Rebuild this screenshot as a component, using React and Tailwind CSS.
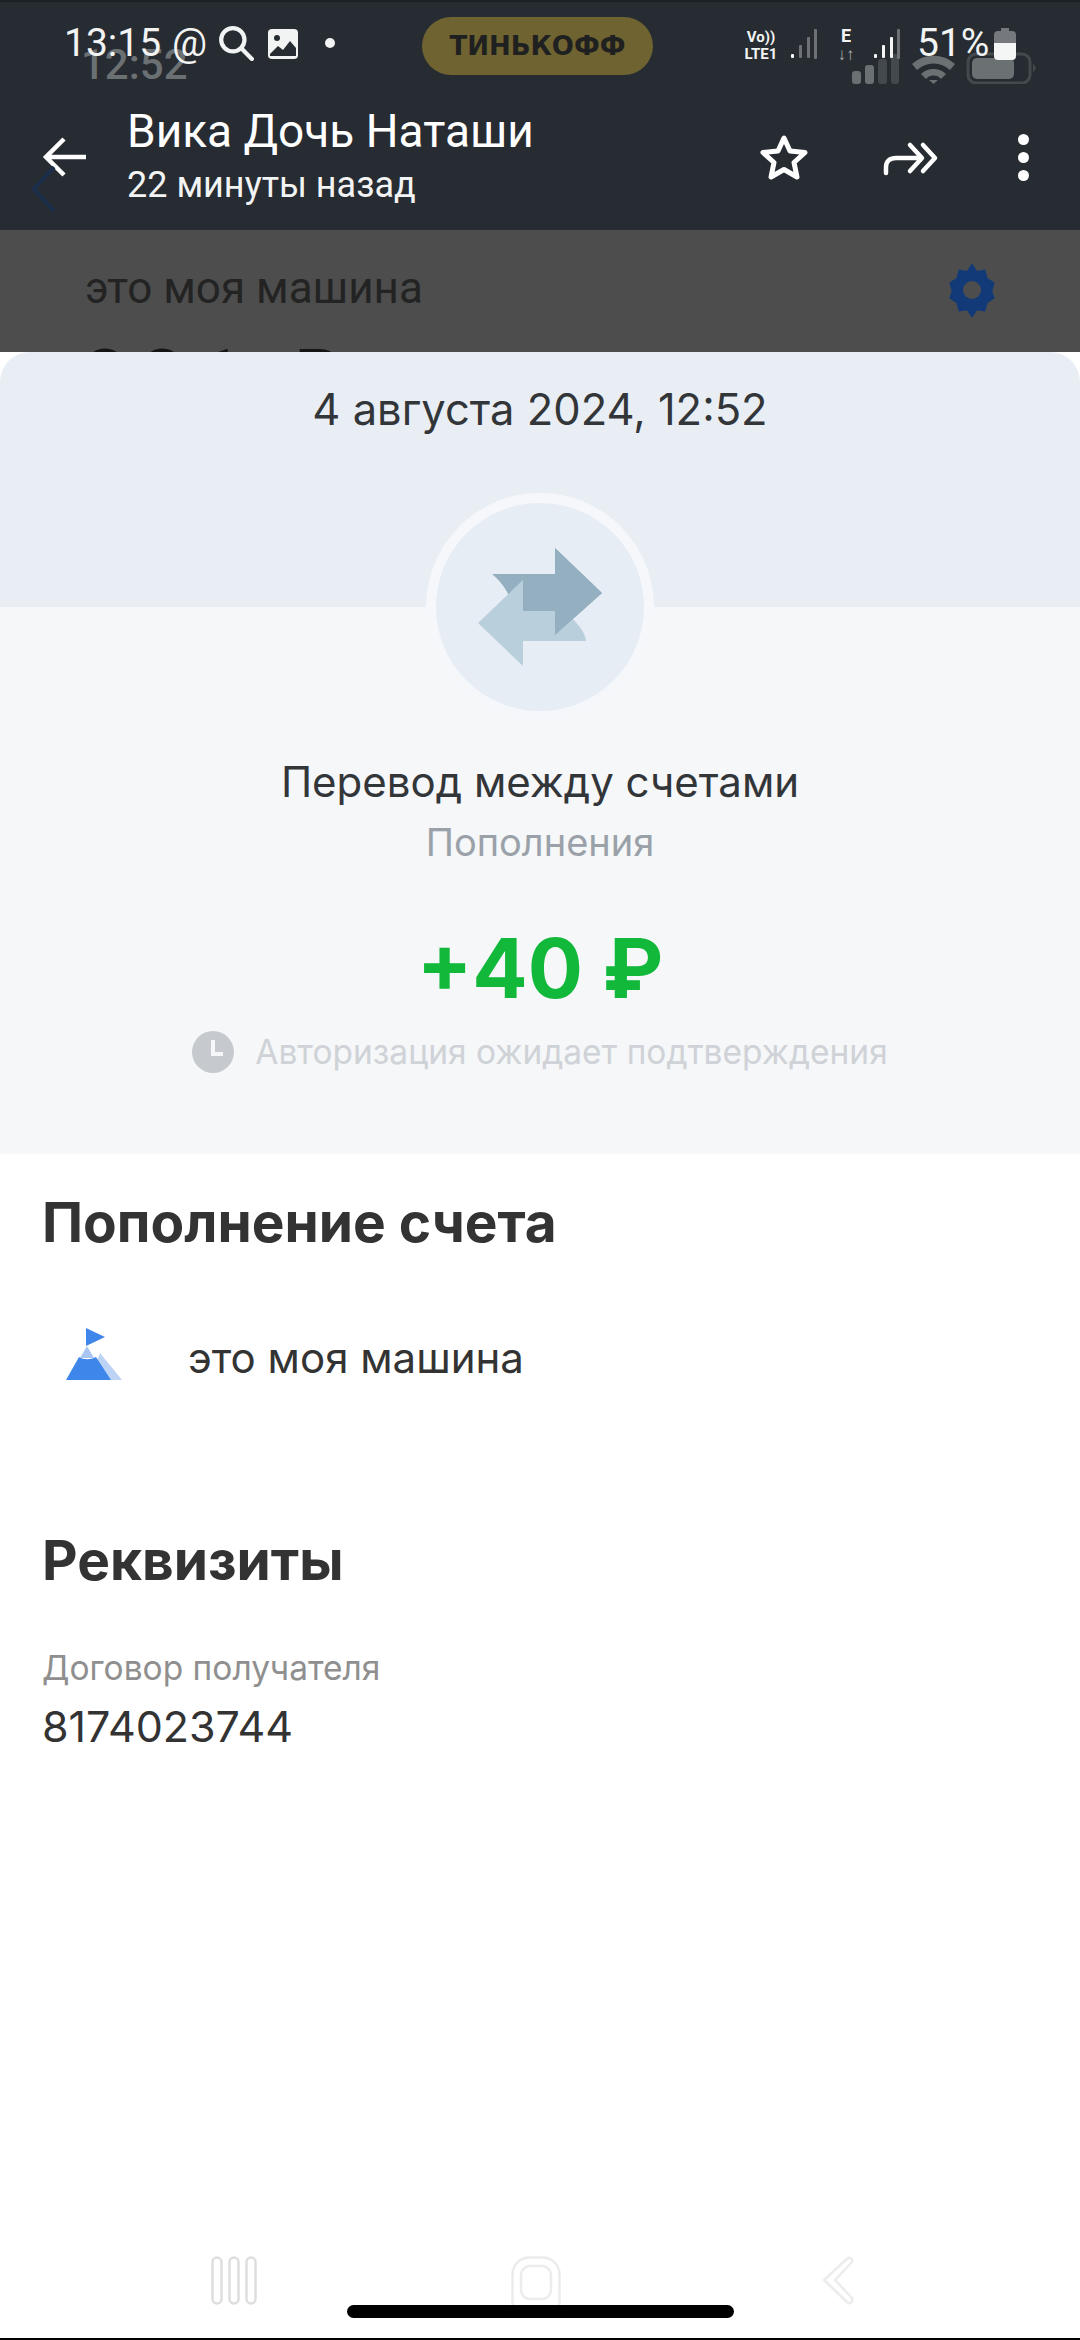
import React from 'react';

const SignalBars = ({ active, className }) => (
  <svg viewBox="0 0 28 30" className={className}>
    {[[1, 25, 4], [9, 16, 13], [17, 8, 21], [24, 0, 30]].map(([x, y, h], i) => (
      <rect key={x} x={x} y={y} width="3" height={h} rx="1" fill={i < active ? '#f4f5f5' : '#6e7276'} />
    ))}
  </svg>
);

const StatusBar = () => (
  <div className="flex h-[94px] items-start pt-[21px] text-[#f2f3f3]">
    <span className="ml-[64px] w-[98px] text-[39px] leading-[40px]">13:15</span>
    <span className="ml-[10px] w-[38px] text-[39px] leading-[40px]">@</span>
    <svg viewBox="0 0 34 34" className="ml-[8px] mt-[2px] h-[36px] w-[36px]" fill="none" stroke="#f2f3f3">
      <circle cx="14" cy="14" r="11" strokeWidth="4" />
      <path d="M22 22l10 10" strokeWidth="4" strokeLinecap="round" />
    </svg>
    <svg viewBox="0 0 30 30" className="ml-[14px] mt-[6px] h-[30px] w-[30px]">
      <rect width="30" height="30" rx="4" fill="#f2f3f3" />
      <circle cx="9" cy="9" r="3" fill="#272c32" />
      <path d="M2 25l8-8 5 4 7-9 6 7v8H2z" fill="#272c32" />
    </svg>
    <span className="ml-[27px] mt-[15px] h-[10px] w-[10px] rounded-full bg-[#f2f3f3]" />
    <div className="ml-[87px] flex h-[58px] w-[231px] -translate-y-[6px] items-center justify-center rounded-full bg-[#6f6331]">
      <span className="font-['DejaVu_Sans',sans-serif] text-[26px] font-bold leading-none text-[#1f2020]">ТИНЬКОФФ</span>
    </div>
    <div className="ml-[88px] flex w-[40px] flex-col items-center pt-[6px] text-[15px] font-bold leading-[17px]">
      <span>Vo))</span>
      <span>LTE1</span>
    </div>
    <SignalBars active={1} className="ml-[9px] mt-[6px] h-[30px] w-[28px]" />
    <div className="ml-[16px] flex w-[24px] flex-col items-center pt-[4px] text-[18px] font-bold leading-[18px]">
      <span>E</span>
      <span className="text-[17px] font-normal text-[#a8abad]">↓↑</span>
    </div>
    <SignalBars active={3} className="ml-[15px] mt-[6px] h-[30px] w-[28px]" />
    <span className="ml-[16px] text-[39px] leading-[40px]">51%</span>
    <svg viewBox="0 0 22 32" className="ml-[5px] mt-[5px] h-[32px] w-[22px]">
      <path d="M7 0h8v3h3a4 4 0 014 4v8H0V7a4 4 0 014-4h3z" fill="#75797d" />
      <path d="M0 15h22v13a4 4 0 01-4 4H4a4 4 0 01-4-4z" fill="#f4f5f5" />
    </svg>
  </div>
);

// status bar of the screenshot's screenshot, shows through faintly
const GhostStatus = () => (
  <>
    <span className="absolute left-[81px] top-[43px] text-[42px] font-medium leading-[40px] text-[#6b7072]">12:52</span>
    <svg viewBox="0 0 186 32" className="absolute left-[850px] top-[50px] h-[32px] w-[186px]" fill="#6b7072">
      <rect x="2" y="19" width="9" height="13" rx="3" />
      <rect x="15" y="13" width="9" height="19" rx="3" />
      <rect x="28" y="7" width="9" height="25" rx="3" fill="#44494d" />
      <rect x="41" y="2" width="8" height="30" rx="3" fill="#44494d" />
      <path d="M62 12a32 32 0 0143 0l-5 6a24 24 0 00-33 0z" />
      <path d="M71 22a18 18 0 0125 0l-5 5a10 10 0 00-15 0z" />
      <path d="M79 28h9l-4.500 4z" />
      <rect x="118" y="2" width="62" height="29" rx="8" fill="none" stroke="#44494d" strokeWidth="3" />
      <rect x="122" y="6" width="42" height="21" rx="5" />
      <path d="M183 11l3 5-3 5z" fill="#44494d" />
    </svg>
  </>
);

const AppBar = () => (
  <div className="flex items-start">
    <svg viewBox="0 0 44 40" className="ml-[42px] mt-[41px] h-[40px] w-[44px]" fill="none" stroke="#fff" strokeWidth="4.500">
      <path d="M22 2L4 20l18 18M4 20h40" />
    </svg>
    <div className="ml-[41px] mt-[10px] flex w-[600px] flex-col">
      <span className="text-[46px] leading-[50px] text-white">Вика Дочь Наташи</span>
      <span className="mt-[9px] text-[36px] leading-[40px] text-[#f2f3f3]">22 минуты назад</span>
    </div>
    <svg viewBox="0 0 48 46" className="ml-[33px] mt-[38px] h-[46px] w-[48px]" fill="none" stroke="#fff" strokeWidth="5" strokeLinejoin="round">
      <path d="M24 4l6 13 15 1.500-11 10 3 14.500-13-7.500L11 43l3-14.500-11-10L18 17z" />
    </svg>
    <svg viewBox="0 0 56 36" className="ml-[75px] mt-[44px] h-[36px] w-[56px]" fill="none" stroke="#fff" strokeWidth="4.500" strokeLinecap="round" strokeLinejoin="round">
      <path d="M3 33v-6c0-6 4-9 10-9h25M27 5l12 13-12 13M40 5l12 13-12 13" />
    </svg>
    <div className="ml-[79px] mt-[38px] flex flex-col gap-[7px]">
      <span className="h-[11px] w-[11px] rounded-full bg-white" />
      <span className="h-[11px] w-[11px] rounded-full bg-white" />
      <span className="h-[11px] w-[11px] rounded-full bg-white" />
    </div>
  </div>
);

const TransferIcon = () => (
  <svg viewBox="0 0 124 118" className="h-[118px] w-[124px]">
    <path d="M14 26h63V0l47 45-47 42V63H36C34 50 26 36 14 26z" fill="#93afc0" />
    <path d="M0 75l45-43v31h42c12 12 20 20 21 30H45v25z" fill="#b9cfdb" />
    <path d="M77 0l47 45-47 42z" fill="#93afc0" />
  </svg>
);

const ClockIcon = () => (
  <svg viewBox="0 0 42 42" className="h-[42px] w-[42px]">
    <circle cx="21" cy="21" r="21" fill="#c6cacf" />
    <path d="M21 9v14h10" fill="none" stroke="#f5f7f9" strokeWidth="4" />
  </svg>
);

const FlagIcon = () => (
  <svg viewBox="0 0 56 52" className="h-[52px] w-[56px]">
    <path d="M20 0l19 9-19 9z" fill="#3f86ea" />
    <path d="M34 25l22 27H24z" fill="#bdd3f5" />
    <path d="M21 18l7 12H14z" fill="#a9c6f2" />
    <path d="M13 29c5 3 11 3 17 0l15 23H0z" fill="#3f86ea" />
  </svg>
);

const NavBar = () => (
  <div className="mt-auto flex flex-col items-center border-b-2 border-black">
    <div className="flex h-[49px] w-full items-start">
      <svg viewBox="0 0 46 49" className="ml-[211px] h-[49px] w-[46px]" fill="none" stroke="#dedede" strokeWidth="2.500">
        <rect x="1.500" y="1.500" width="9" height="46" rx="4.500" />
        <rect x="18.500" y="1.500" width="9" height="46" rx="4.500" />
        <rect x="35.500" y="1.500" width="9" height="46" rx="4.500" />
      </svg>
      <svg viewBox="0 0 50 49" className="ml-[254px] h-[49px] w-[50px]" fill="none" stroke="#ececec" strokeWidth="2.500">
        <rect x="1.500" y="1.500" width="47" height="62" rx="17" />
        <rect x="10" y="10" width="30" height="33" rx="9" />
      </svg>
      <svg viewBox="0 0 32 49" className="ml-[261px] h-[49px] w-[32px]" fill="none" stroke="#ececec" strokeWidth="2.500" strokeLinejoin="round">
        <path d="M26 2c3-1 5 2 4 4L13 24l17 18c1 3-1 6-4 5L2 24z" />
      </svg>
    </div>
    <div className="mb-[20px] h-[13px] w-[387px] rounded-full bg-black" />
  </div>
);

export default function App() {
  return (
    <div className="flex h-[2340px] w-[1080px] flex-col overflow-hidden bg-white font-['Roboto',sans-serif]">
      <header className="relative h-[230px] shrink-0 border-t-2 border-[#1c2126] bg-[#272c32]">
        <GhostStatus />
        <div className="relative">
          <StatusBar />
          <AppBar />
        </div>
        {/* chevron of the app underneath */}
        <svg viewBox="0 0 30 50" className="absolute left-[30px] top-[163px] h-[50px] w-[30px]" fill="none" stroke="#1b2f4c" strokeWidth="4">
          <path d="M24 2L4 24l20 22" />
        </svg>
      </header>

      <div className="flex h-[122px] shrink-0 items-start justify-between overflow-hidden bg-[#4c4d4c] pl-[85px] pr-[81px] pt-[36px]">
        <div className="flex flex-col">
          <span className="text-[44px] leading-[44px] text-[#232323]">это моя машина</span>
          <span className="mt-[37px] text-[72px] font-bold leading-[60px] tracking-[16px] text-[#151515]">331 ₽</span>
        </div>
        <svg viewBox="0 0 24 24" className="-mt-[3px] h-[54px] w-[54px]" fill="#123a78" stroke="#123a78">
          <path d="M12 1l2 3 3.500-.5 1 3.500 3 2-1 3.500 1 3-3 2-1 3.500-3.500-.5-2 3-2-3-3.500.5-1-3.500-3-2 1-3-1-3.500 3-2 1-3.500 3.500.5z" />
          <circle cx="12" cy="12" r="4" fill="#4c4d4c" stroke="none" />
        </svg>
      </div>

      <main className="flex flex-1 flex-col overflow-hidden rounded-t-[30px] bg-white font-['Inter',sans-serif]">
        <section className="flex h-[802px] shrink-0 flex-col items-center bg-[linear-gradient(#e9eef5_255px,#f5f7f9_255px)] pt-[34px]">
          <span className="text-[43.500px] leading-[46px] text-[#333639]">4 августа 2024, 12:52</span>
          <div className="mt-[61px] flex h-[228px] w-[228px] items-center justify-center rounded-full border-[10px] border-[#f5f7fa] bg-[#e7edf5]">
            <TransferIcon />
          </div>
          <span className="mt-[38px] text-[42px] leading-[46px] text-[#333639]">Перевод между счетами</span>
          <span className="mt-[17px] text-[38px] leading-[40px] text-[#9aa1a9]">Пополнения</span>
          <span className="mt-[57px] text-[82px] font-bold leading-[100px] text-[#12b83a]">+40 ₽</span>
          <div className="mt-[12px] flex items-center gap-[21px]">
            <ClockIcon />
            <span className="text-[33.500px] leading-[40px] text-[#cfd2d6]">Авторизация ожидает подтверждения</span>
          </div>
        </section>

        <section className="flex flex-col px-[42px] pt-[38px]">
          <h2 className="text-[55px] font-bold leading-[60px] text-[#333333]">Пополнение счета</h2>
          <div className="mt-[80px] flex items-center">
            <span className="ml-[24px] -translate-y-[4px]">
              <FlagIcon />
            </span>
            <span className="ml-[66px] text-[42px] leading-[52px] text-[#333333]">это моя машина</span>
          </div>
          <h2 className="mt-[146px] text-[55px] font-bold leading-[60px] text-[#333333]">Реквизиты</h2>
          <span className="mt-[58px] text-[33.500px] leading-[40px] text-[#8f8f8f]">Договор получателя</span>
          <span className="mt-[12px] text-[43px] leading-[52px] text-[#333333]">8174023744</span>
        </section>

        <NavBar />
      </main>
    </div>
  );
}
